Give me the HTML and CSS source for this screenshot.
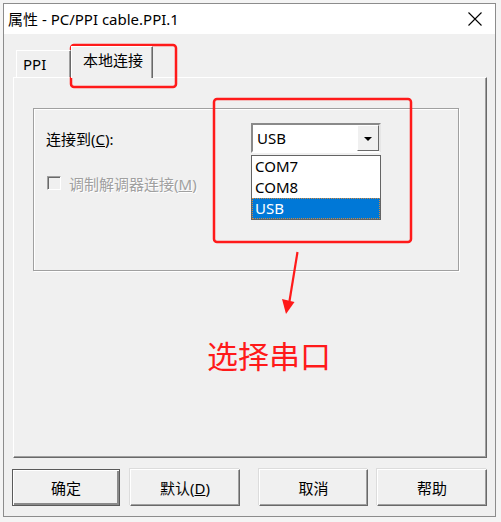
FILE: index.html
```html
<!DOCTYPE html>
<html>
<head>
<meta charset="utf-8">
<link rel="stylesheet" href="styles.css">
</head>
<body>
<div class="window">
  <div class="titlebar">
    <span class="title">属性 - PC/PPI cable.PPI.1</span>
    <svg class="close" width="14" height="14" viewBox="0 0 14 14"><path d="M0.5 0.5 L13.5 13.5 M13.5 0.5 L0.5 13.5" stroke="#000" stroke-width="1.1" fill="none"/></svg>
  </div>
  <div class="content">
    <div class="tabs">
      <div class="tab">PPI</div>
      <div class="tab active">本地连接</div>
    </div>
    <div class="panel">
      <div class="group">
        <div class="row">
          <span class="label">连接到(<u>C</u>):</span>
          <div class="combo">
            <div class="combo-field">
              <span class="combo-text">USB</span>
              <span class="combo-btn"><span class="tri"></span></span>
            </div>
            <div class="droplist">
              <div class="item">COM7</div>
              <div class="item">COM8</div>
              <div class="item sel">USB</div>
            </div>
          </div>
        </div>
        <div class="row check-row">
          <span class="checkbox"></span>
          <span class="check-label">调制解调器连接(<u>M</u>)</span>
        </div>
      </div>
    </div>
    <div class="buttons">
      <div class="btn default">确定</div>
      <div class="btn b2">默认(<u>D</u>)</div>
      <div class="btn b3">取消</div>
      <div class="btn b4">帮助</div>
    </div>
  </div>
</div>
<svg class="annot" width="501" height="522" viewBox="0 0 501 522">
  <rect x="71" y="45" width="105" height="42" rx="3" ry="3" fill="none" stroke="#ff1a1a" stroke-width="2.5"/>
  <rect x="214" y="99" width="197" height="143" rx="3" ry="3" fill="none" stroke="#ff1a1a" stroke-width="2.5"/>
  <path d="M297.5 252 L289.5 301" stroke="#ff1a1a" stroke-width="2.2" fill="none"/>
  <polygon points="282,299 294.5,302 286,314" fill="#ff1a1a"/>
</svg>
<div class="note">选择串口</div>
</body>
</html>
```

FILE: styles.css
```css
html, body {
  margin: 0;
  padding: 0;
}
body {
  width: 501px;
  height: 522px;
  overflow: hidden;
  position: relative;
  background: #f4f4f4;
  font-family: "Noto Sans", "Noto Sans CJK SC", sans-serif;
  font-size: 15px;
  color: #000;
}
.window {
  margin: 3px 0 0 3px;
  width: 493px;
  height: 514px;
  box-sizing: border-box;
  border: 1px solid #8c8c8c;
  background: #f0f0f0;
  display: flex;
  flex-direction: column;
}
.titlebar {
  height: 30px;
  flex: none;
  background: #fff;
  display: flex;
  align-items: center;
  padding-left: 4px;
  padding-right: 13px;
}
.title {
  flex: 1;
  font-size: 15px;
  line-height: 20px;
  white-space: nowrap;
}
.close {
  display: block;
}
.content {
  flex: 1;
  padding: 11px 8px 0 9px;
  display: flex;
  flex-direction: column;
}
.tabs {
  height: 32px;
  display: flex;
  align-items: flex-end;
  position: relative;
  z-index: 1;
}
.tab {
  box-sizing: border-box;
  height: 27px;
  width: 55px;
  margin-left: 3px;
  border-top: 1px solid #fff;
  border-left: 1px solid #fff;
  border-right: 1px solid #696969;
  box-shadow: inset -1px 0 #a0a0a0;
  background: #f0f0f0;
  padding-left: 6px;
  line-height: 27px;
  font-size: 15px;
}
.tab.active {
  margin-left: 0;
  width: 82px;
  height: 32px;
  margin-bottom: -1px;
  padding-left: 11px;
  line-height: 27px;
}
.panel {
  box-sizing: border-box;
  height: 381px;
  border-top: 1px solid #fff;
  border-left: 1px solid #fff;
  border-right: 1px solid #696969;
  border-bottom: 1px solid #696969;
  box-shadow: inset -1px -1px #a0a0a0;
  padding: 30px 0 0 19px;
}
.group {
  box-sizing: border-box;
  width: 426px;
  height: 163px;
  border: 1px solid #a0a0a0;
  box-shadow: inset 1px 1px #fff, 1px 1px #fff;
  padding: 14px 0 0 12px;
}
.row {
  display: flex;
  align-items: center;
  height: 30px;
}
.label {
  width: 205px;
  font-size: 15px;
}
.combo {
  position: relative;
  width: 130px;
  height: 30px;
}
.combo-field {
  box-sizing: border-box;
  height: 30px;
  border: 2px solid;
  border-color: #8a8a8a #e6e6e6 #fff #8a8a8a;
  background: #fff;
  display: flex;
  align-items: center;
}
.combo-text {
  flex: 1;
  padding-left: 4px;
  font-size: 15px;
}
.combo-btn {
  box-sizing: border-box;
  width: 22px;
  height: 26px;
  background: #f0f0f0;
  border: 1px solid;
  border-color: #fff #696969 #696969 #fff;
  display: flex;
  align-items: center;
  justify-content: center;
}
.tri {
  width: 0;
  height: 0;
  border-left: 4px solid transparent;
  border-right: 4px solid transparent;
  border-top: 4px solid #000;
  margin-top: 1px;
}
.droplist {
  position: absolute;
  left: 0;
  top: 32px;
  width: 130px;
  box-sizing: border-box;
  border: 1px solid #646464;
  background: #fff;
  z-index: 2;
}
.item {
  height: 21px;
  line-height: 21px;
  padding-left: 3px;
  font-size: 15px;
}
.item.sel {
  background: #0078d7;
  color: #fff;
  outline: 1px dotted #d08a40;
  outline-offset: -1px;
}
.check-row {
  margin-top: 15px;
}
.checkbox {
  box-sizing: border-box;
  width: 14px;
  height: 14px;
  margin-left: 1px;
  border: 1px solid;
  border-color: #a0a0a0 #fff #fff #a0a0a0;
  box-shadow: inset 1px 1px #696969;
  background: #f0f0f0;
}
.check-label {
  margin-left: 8px;
  color: #a0a0a0;
  font-size: 15px;
  text-shadow: 1px 1px #fff;
}
.buttons {
  display: flex;
  margin-top: 11px;
  margin-left: -1px;
}
.btn {
  box-sizing: border-box;
  height: 37px;
  width: 109px;
  border: 1px solid;
  border-color: #fff #696969 #696969 #fff;
  box-shadow: inset -1px -1px #a0a0a0, -1px -1px #dcdcdc;
  background: #f0f0f0;
  display: flex;
  align-items: center;
  justify-content: center;
  font-size: 15px;
}
.btn.default {
  width: 108px;
  border: 1px solid #5a5a5a;
  box-shadow: inset 1px 1px #fff, inset -2px -2px #8a8a8a;
}
.btn.b2 {
  width: 110px;
  margin-left: 10px;
}
.btn.b3 {
  margin-left: 19px;
}
.btn.b4 {
  width: 110px;
  margin-left: 9px;
}
.annot {
  position: absolute;
  left: 0;
  top: 0;
  pointer-events: none;
}
.note {
  position: absolute;
  left: 207px;
  top: 333px;
  font-family: "Noto Sans CJK SC", sans-serif;
  font-weight: 400;
  font-size: 31px;
  line-height: 44px;
  color: #ff1a1a;
  letter-spacing: 0;
}
```
